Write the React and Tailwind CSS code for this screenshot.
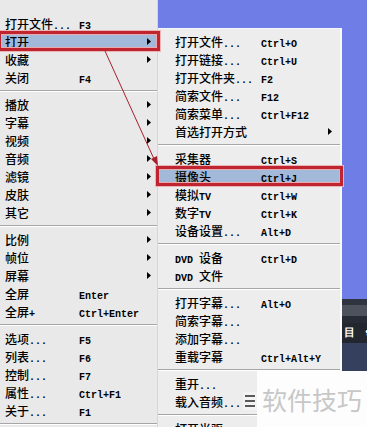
import React from "react";

const LEFT = [
  { label: "打开文件...", key: "F3" },
  { label: "打开", arrow: true, active: true },
  { label: "收藏", arrow: true },
  { label: "关闭", key: "F4" },
  "sep",
  { label: "播放", arrow: true },
  { label: "字幕", arrow: true },
  { label: "视频", arrow: true },
  { label: "音频", arrow: true },
  { label: "滤镜", arrow: true },
  { label: "皮肤", arrow: true },
  { label: "其它", arrow: true },
  "sep",
  { label: "比例", arrow: true },
  { label: "帧位", arrow: true },
  { label: "屏幕", arrow: true },
  { label: "全屏", key: "Enter" },
  { label: "全屏+", key: "Ctrl+Enter" },
  "sep",
  { label: "选项...", key: "F5" },
  { label: "列表...", key: "F6" },
  { label: "控制...", key: "F7" },
  { label: "属性...", key: "Ctrl+F1" },
  { label: "关于...", key: "F1" },
  "sep",
];

const SUB = [
  { label: "打开文件...", key: "Ctrl+O" },
  { label: "打开链接...", key: "Ctrl+U" },
  { label: "打开文件夹...", key: "F2" },
  { label: "简索文件...", key: "F12" },
  { label: "简索菜单...", key: "Ctrl+F12" },
  { label: "首选打开方式", arrow: true },
  "sep",
  { label: "采集器", key: "Ctrl+S" },
  { label: "摄像头", key: "Ctrl+J", active: true },
  { label: "模拟TV", key: "Ctrl+W" },
  { label: "数字TV", key: "Ctrl+K" },
  { label: "设备设置...", key: "Alt+D" },
  "sep",
  { label: "DVD 设备", key: "Ctrl+D" },
  { label: "DVD 文件" },
  "sep",
  { label: "打开字幕...", key: "Alt+O" },
  { label: "简索字幕..." },
  { label: "添加字幕..." },
  { label: "重载字幕", key: "Ctrl+Alt+Y" },
  "sep",
  { label: "重开..." },
  { label: "载入音频..." },
  "sep",
  { label: "打开光驱...", key: "Ctrl+E" },
];

// chinese in a CJK face, latin bits in a 6px-wide mono like the old bitmap font
const Txt = ({ text }) => {
  const runs = text.match(/[\u4e00-\u9fff]+|[^\u4e00-\u9fff]+/g) || [];
  return runs.map((r, i) =>
    /[\u4e00-\u9fff]/.test(r) ? (
      <span key={i} className="font-['Noto_Sans_CJK_SC',sans-serif] font-medium text-[12px] leading-[18px]">
        {r}
      </span>
    ) : (
      <span key={i} className="font-['Liberation_Mono',monospace] font-bold text-[10px] leading-[18px] whitespace-pre">
        {r}
      </span>
    )
  );
};

const Arrow = () => (
  <svg width="4" height="7" viewBox="0 0 4 7" className="block">
    <polygon points="0,0 4,3.5 0,7" fill="#000" />
  </svg>
);

const Sep = () => (
  <div className="h-[9px] flex items-center">
    <div className="w-full h-0 border-t border-[#a6a6a6] border-b border-b-white" />
  </div>
);

const Menu = ({ items, labelW, padL, padR, boxClass }) => (
  <>
    {items.map((it, i) =>
      it === "sep" ? (
        <Sep key={i} />
      ) : (
        <div
          key={i}
          className={`relative h-[18px] flex items-center text-black ${it.active ? "bg-[#a3b9da]" : ""}`}
          style={{ paddingLeft: padL, paddingRight: padR }}
        >
          <div className="shrink-0 whitespace-nowrap" style={{ width: labelW }}>
            <Txt text={it.label} />
          </div>
          <div className="flex-1 whitespace-nowrap">
            {it.key && (
              <span className="font-['Liberation_Mono',monospace] font-bold text-[10px] leading-[18px]">{it.key}</span>
            )}
          </div>
          {it.arrow && <Arrow />}
          {it.active && (
            <div className={`absolute border-[3px] border-[#c0242f] shadow-[0_0_0_1px_#eab3b6,inset_0_0_0_1px_#e9a9ad] ${boxClass}`} />
          )}
        </div>
      )
    )}
  </>
);

export default function App() {
  return (
    <div className="relative w-[367px] h-[427px] overflow-hidden bg-[#6e7ee6] flex">
      {/* main menu */}
      <div className="w-[158px] h-full shrink-0 bg-[#e9e9e9] pt-[14px] border-r border-[#d6d6d6]">
        <Menu items={LEFT} labelW={74} padL={5} padR={6} boxClass="-top-[1px] -bottom-[1px] -left-[2px] -right-[3px]" />
      </div>

      {/* open submenu */}
      <div className="w-[184px] shrink-0 flex flex-col">
        <div className="h-[28px] shrink-0" />
        <div className="flex-1 bg-[#ededed] pt-[3px] border-t border-[#f7f7f7] border-r-2 border-r-[#fafafa]">
          <Menu items={SUB} labelW={86} padL={17} padR={8} boxClass="-top-[1px] -bottom-[1px] -left-[2px] -right-[3px]" />
        </div>
      </div>

      {/* player window behind */}
      <div className="flex-1 flex flex-col">
        <div className="h-[299px] shrink-0" />
        <div className="h-[6px] bg-[#30343f]" />
        <div className="h-[11px] bg-[#4d525d]" />
        <div className="h-[7px] bg-[#272b35]" />
        <div className="h-[20px] bg-[#22262f] flex items-center gap-[10px] pl-[2px] text-white text-[11px] font-['DejaVu_Sans',sans-serif] font-bold">
          <span>目</span>
          <span>✿</span>
        </div>
        <div className="flex-1 bg-[#34405e]" />
      </div>

      {/* watermark */}
      <div className="absolute left-[257px] top-[371px] right-0 bottom-0 bg-[#fdfdfd] flex items-center pl-[5px]">
        <span className="font-['Noto_Sans_CJK_SC',sans-serif] text-[25px] leading-none text-[#c7c7c7]">
          软件技巧
        </span>
      </div>
      <div className="absolute left-[243px] top-[392px] w-[14px] h-[18px] bg-[#f3f3f3]/90 flex flex-col justify-center gap-[3px] px-[2px]">
        <div className="h-[2px] bg-[#5a5a5a]" />
        <div className="h-[2px] bg-[#5a5a5a]" />
        <div className="h-[2px] bg-[#5a5a5a]" />
      </div>

      {/* red annotation arrow */}
      <svg className="absolute left-0 top-0 pointer-events-none" width="367" height="427">
        <line x1="105" y1="51" x2="154" y2="159" stroke="#a8202b" strokeWidth="1" />
        <polygon points="158,166 151,159 157,156" fill="#a8202b" />
      </svg>
    </div>
  );
}
